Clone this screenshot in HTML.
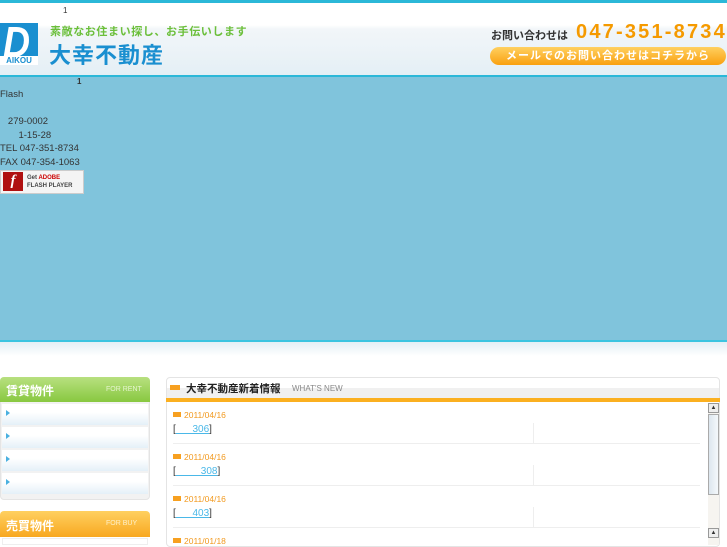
<!DOCTYPE html>
<html><head><meta charset="utf-8"><style>
*{margin:0;padding:0;box-sizing:border-box}
body{width:727px;height:545px;overflow:hidden;background:#fff;font-family:"Liberation Sans","Noto Sans CJK JP",sans-serif;font-size:10px;color:#333;position:relative}
.a{position:absolute}
</style></head><body>
<div class="a" style="left:0;top:0;width:727px;height:3px;background:#2bb8d8"></div>
<div class="a" style="left:0;top:3px;width:727px;height:73px;background:linear-gradient(#fff 0,#fff 22px,#f2f6f9 26px,#e4eff5 73px)"></div>
<div class="a" style="left:63px;top:6px;font-size:8px">1</div>
<div class="a" style="left:0;top:23px;width:38px;height:42px;background:#1a8fd0"></div>
<div class="a" style="left:3px;top:18px;font:italic bold 44px 'Liberation Sans',sans-serif;color:#fff;letter-spacing:-2px;transform:scaleX(0.85);transform-origin:left">D</div>
<div class="a" style="left:0;top:56px;width:38px;height:9px;background:#fff;color:#1a8fd0;font:bold 8px 'Liberation Sans',sans-serif;text-align:center;line-height:9px">AIKOU</div>
<div class="a" style="left:50px;top:23px;font-size:11px;color:#6bbf3a;font-weight:bold;letter-spacing:0.6px">素敵なお住まい探し、お手伝いします</div>
<div class="a" style="left:49px;top:38px;font-size:22px;color:#1a8fd0;font-weight:bold;letter-spacing:1px">大幸不動産</div>
<div class="a" style="left:491px;top:27px;font-size:11px;font-weight:bold;color:#333">お問い合わせは</div>
<div class="a" style="left:576px;top:21px;font-size:20px;font-weight:bold;color:#f59a00;letter-spacing:2.2px">047-351-8734</div>
<div class="a" style="left:490px;top:47px;width:236px;height:18px;border-radius:9px;background:linear-gradient(#ffd060,#f9a010);color:#fff;font-size:11px;font-weight:bold;text-align:center;line-height:18px;letter-spacing:1px">メールでのお問い合わせはコチラから</div>
<div class="a" style="left:0;top:75px;width:727px;height:2px;background:#2bb8d8"></div>
<div class="a" style="left:0;top:77px;width:727px;height:263px;background:#80c4dc"></div>
<div class="a" style="left:77px;top:77px;font-size:8px;font-weight:bold">1</div>
<div class="a" style="left:0;top:88px;line-height:13.5px;font-size:9.5px">Flash<br><br>&nbsp;&nbsp;&nbsp;279-0002<br>&nbsp;&nbsp;&nbsp;&nbsp;&nbsp;&nbsp;&nbsp;1-15-28<br>TEL 047-351-8734<br>FAX 047-354-1063</div>
<div class="a" style="left:0;top:170px;width:84px;height:24px;background:#f4f4f4;border:1px solid #ccc"></div>
<div class="a" style="left:3px;top:172px;width:20px;height:19px;background:#b01010;color:#fff;font:italic bold 15px serif;text-align:center;line-height:19px">f</div>
<div class="a" style="left:27px;top:174px;font-size:6px;line-height:8px;font-weight:bold;color:#444">Get <span style="color:#c00">ADOBE</span><br>FLASH PLAYER</div>
<div class="a" style="left:0;top:340px;width:727px;height:2px;background:#3cc4e0"></div>
<div class="a" style="left:0;top:342px;width:727px;height:14px;background:linear-gradient(#e4eff5,#fff)"></div>
<div class="a" style="left:0;top:377px;width:150px;height:123px;border:1px solid #e4e4e4;border-radius:4px;background:#f2f2f2"></div>
<div class="a" style="left:0;top:377px;width:150px;height:25px;border-radius:4px 4px 0 0;background:linear-gradient(#b8e080,#88c840)"></div>
<div class="a" style="left:6px;top:382px;font-size:12px;font-weight:bold;color:#fff">賃貸物件</div>
<div class="a" style="left:106px;top:386px;font-size:7px;color:#e6f5d0">FOR RENT</div>
<div class="a" style="left:2px;top:404px;width:146px;height:21px;background:linear-gradient(#fff 40%,#e4f0f8)"></div>
<div class="a" style="left:2px;top:427px;width:146px;height:21px;background:linear-gradient(#fff 40%,#e4f0f8)"></div>
<div class="a" style="left:2px;top:450px;width:146px;height:21px;background:linear-gradient(#fff 40%,#e4f0f8)"></div>
<div class="a" style="left:2px;top:473px;width:146px;height:21px;background:linear-gradient(#fff 40%,#e4f0f8)"></div>
<div class="a" style="left:6px;top:410px;border-left:4px solid #4ab0e0;border-top:3px solid transparent;border-bottom:3px solid transparent"></div>
<div class="a" style="left:6px;top:433px;border-left:4px solid #4ab0e0;border-top:3px solid transparent;border-bottom:3px solid transparent"></div>
<div class="a" style="left:6px;top:456px;border-left:4px solid #4ab0e0;border-top:3px solid transparent;border-bottom:3px solid transparent"></div>
<div class="a" style="left:6px;top:479px;border-left:4px solid #4ab0e0;border-top:3px solid transparent;border-bottom:3px solid transparent"></div>
<div class="a" style="left:0;top:511px;width:150px;height:26px;border-radius:4px 4px 0 0;background:linear-gradient(#ffd060,#f8a820)"></div>
<div class="a" style="left:6px;top:517px;font-size:12px;font-weight:bold;color:#fff">売買物件</div>
<div class="a" style="left:106px;top:520px;font-size:7px;color:#fff0c8">FOR BUY</div>
<div class="a" style="left:2px;top:538px;width:146px;height:7px;background:#fff;border:1px solid #eee"></div>
<div class="a" style="left:166px;top:377px;width:554px;height:170px;border:1px solid #e4e4e4;border-radius:4px;background:#fff"></div>
<div class="a" style="left:167px;top:388px;width:552px;height:10px;background:#f0f0f0"></div>
<div class="a" style="left:166px;top:398px;width:554px;height:4px;background:#fbb020"></div>
<div class="a" style="left:170px;top:385px;width:10px;height:5px;background:#f7a020"></div>
<div class="a" style="left:186px;top:381px;font-size:10.5px;font-weight:bold;color:#222">大幸不動産新着情報</div>
<div class="a" style="left:292px;top:384px;font-size:8px;color:#888">WHAT'S NEW</div>
<div class="a" style="left:708px;top:403px;width:11px;height:142px;background:#f6f4f0"></div>
<div class="a" style="left:708px;top:403px;width:11px;height:10px;background:#eee;border:1px solid #999;font-size:6px;line-height:8px;text-align:center">▲</div>
<div class="a" style="left:708px;top:414px;width:11px;height:81px;background:linear-gradient(90deg,#dde6ee,#f4f8fb);border:1px solid #aaa"></div>
<div class="a" style="left:708px;top:528px;width:11px;height:10px;background:#eee;border:1px solid #999;font-size:6px;line-height:8px;text-align:center">▲</div>
<div class="a" style="left:173px;top:412px;width:8px;height:5px;background:#f7a020"></div>
<div class="a" style="left:184px;top:410px;font-size:8.5px;color:#f29a20">2011/04/16</div>
<div class="a" style="left:173px;top:424px;font-size:10px">[<span style="color:#4ab8e8;text-decoration:underline">&nbsp;&nbsp;&nbsp;&nbsp;&nbsp;&nbsp;306</span>]</div>
<div class="a" style="left:533px;top:423px;width:1px;height:20px;background:#eee"></div>
<div class="a" style="left:173px;top:443px;width:527px;height:1px;background:#eee"></div>
<div class="a" style="left:173px;top:454px;width:8px;height:5px;background:#f7a020"></div>
<div class="a" style="left:184px;top:452px;font-size:8.5px;color:#f29a20">2011/04/16</div>
<div class="a" style="left:173px;top:466px;font-size:10px">[<span style="color:#4ab8e8;text-decoration:underline">&nbsp;&nbsp;&nbsp;&nbsp;&nbsp;&nbsp;&nbsp;&nbsp;&nbsp;308</span>]</div>
<div class="a" style="left:533px;top:465px;width:1px;height:20px;background:#eee"></div>
<div class="a" style="left:173px;top:485px;width:527px;height:1px;background:#eee"></div>
<div class="a" style="left:173px;top:496px;width:8px;height:5px;background:#f7a020"></div>
<div class="a" style="left:184px;top:494px;font-size:8.5px;color:#f29a20">2011/04/16</div>
<div class="a" style="left:173px;top:508px;font-size:10px">[<span style="color:#4ab8e8;text-decoration:underline">&nbsp;&nbsp;&nbsp;&nbsp;&nbsp;&nbsp;403</span>]</div>
<div class="a" style="left:533px;top:507px;width:1px;height:20px;background:#eee"></div>
<div class="a" style="left:173px;top:527px;width:527px;height:1px;background:#eee"></div>
<div class="a" style="left:173px;top:538px;width:8px;height:5px;background:#f7a020"></div>
<div class="a" style="left:184px;top:536px;font-size:8.5px;color:#f29a20">2011/01/18</div>
</body></html>
